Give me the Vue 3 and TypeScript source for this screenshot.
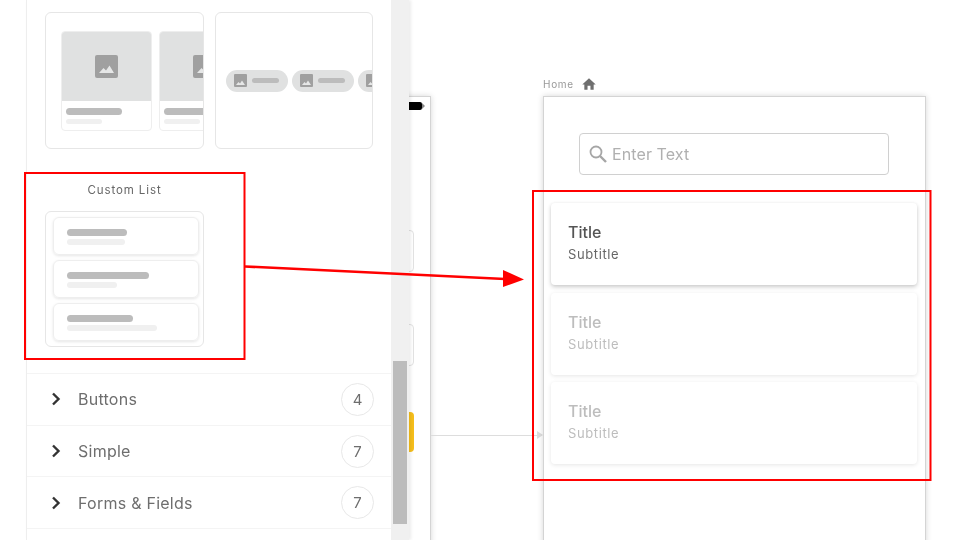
<script setup lang="ts">
interface Section {
  label: string
  count: number
}

const sections: Section[] = [
  { label: 'Buttons', count: 4 },
  { label: 'Simple', count: 7 },
  { label: 'Forms & Fields', count: 7 },
]

// widths of the skeleton bars in the custom list preview
const previewRows = [
  { title: 60, sub: 58 },
  { title: 82, sub: 50 },
  { title: 66, sub: 90 },
]

const listCards = [
  { id: 1, muted: false },
  { id: 2, muted: true },
  { id: 3, muted: true },
]
</script>

<template>
  <div class="stage">
    <aside class="sidebar">
      <div class="panel">
        <div class="thumbs">
          <div class="thumb thumb-cards">
            <div v-for="n in 2" :key="n" class="mini-card">
              <div class="mini-image">
                <svg class="image-icon" viewBox="0 0 23 23">
                  <rect width="23" height="23" rx="2" fill="#a0a0a0" />
                  <path d="M4 18l4.500-5 2.500 2.500 3.500-5L19 18z" fill="#e6e7e7" />
                </svg>
              </div>
              <div class="mini-text">
                <span class="bar bar-dark mini-title"></span>
                <span class="bar bar-light mini-sub"></span>
              </div>
            </div>
          </div>
          <div class="thumb thumb-chips">
            <div v-for="n in 3" :key="n" class="chip">
              <svg class="chip-icon" viewBox="0 0 13 13">
                <rect width="13" height="13" rx="1" fill="#a0a0a0" />
                <path d="M2 11l2.500-3 1.500 1.500 2-3 3 4.500z" fill="#e6e7e7" />
              </svg>
              <span class="bar bar-dark chip-bar"></span>
            </div>
          </div>
        </div>

        <div class="custom-list">
          <div class="custom-label">Custom List</div>
          <div class="thumb preview">
            <div v-for="(row, i) in previewRows" :key="i" class="preview-row">
              <span class="bar bar-dark preview-title" :style="{ width: row.title + 'px' }"></span>
              <span class="bar bar-light preview-sub" :style="{ width: row.sub + 'px' }"></span>
            </div>
          </div>
        </div>

        <ul class="sections">
          <li v-for="s in sections" :key="s.label" class="section">
            <svg class="chevron" viewBox="0 0 10 14">
              <path d="M2 1.500L7.500 7 2 12.500" fill="none" stroke="#333" stroke-width="2.400" />
            </svg>
            <span class="section-label">{{ s.label }}</span>
            <span class="count">{{ s.count }}</span>
          </li>
        </ul>
      </div>
      <div class="scrollbar">
        <div class="scroll-thumb"></div>
      </div>
    </aside>

    <main class="canvas">
      <div class="window window-back">
        <div class="back-pill"></div>
        <div class="back-input first"></div>
        <div class="back-input second"></div>
        <div class="back-button"></div>
      </div>

      <div class="connector"></div>

      <div class="screen">
        <div class="breadcrumb">
          <span>Home</span>
          <svg class="home-icon" viewBox="0 0 24 24">
            <path d="M9.500 22v-7h5v7h5.500v-9h3.500L12 2 .5 13H4v9z" fill="#6f6f6f" />
          </svg>
        </div>
        <div class="window window-front">
          <div class="search">
            <svg class="search-icon" viewBox="0 0 18 18">
              <circle cx="7" cy="7" r="5.500" fill="none" stroke="#a6a6a6" stroke-width="1.800" />
              <path d="M11 11l6 6" stroke="#a6a6a6" stroke-width="2.400" />
            </svg>
            <span class="search-text">Enter Text</span>
          </div>
          <div class="list">
            <div v-for="card in listCards" :key="card.id" class="list-card" :class="{ muted: card.muted }">
              <div class="card-title">Title</div>
              <div class="card-sub">Subtitle</div>
            </div>
          </div>
        </div>
      </div>
    </main>

    <!-- annotation layer, drawn over the whole shot -->
    <svg class="notes" viewBox="0 0 960 540">
      <rect x="25" y="173" width="219.500" height="186" fill="none" stroke="#f00" stroke-width="2" />
      <rect x="533" y="191" width="397.500" height="289" fill="none" stroke="#f00" stroke-width="2" />
      <path d="M245 266.500L505 279" fill="none" stroke="#f00" stroke-width="2.500" />
      <path d="M503 270L524 279.500 503 287z" fill="#f00" />
    </svg>
  </div>
</template>

<style>
html,
body {
  margin: 0;
  background: #fff;
}
</style>

<style scoped>
.stage {
  position: relative;
  display: flex;
  width: 960px;
  height: 540px;
  overflow: hidden;
  background: #fff;
  font-family: "Inter", "Liberation Sans", sans-serif;
  filter: blur(0.45px);
}

/* left panel */
.sidebar {
  position: relative;
  z-index: 2;
  display: flex;
  flex: none;
  width: 383px;
  margin-left: 26px;
  background: #fff;
  border-left: 1px solid #eee;
  box-sizing: border-box;
  box-shadow: 2px 0 3px rgba(0, 0, 0, 0.08);
}

.panel {
  flex: 1;
  min-width: 0;
  padding-top: 12px;
}

.scrollbar {
  flex: none;
  width: 18px;
  padding-top: 361px;
  box-sizing: border-box;
  background: #f0f0f0;
}

.scroll-thumb {
  width: 14px;
  height: 163px;
  margin-left: 2px;
  background: #bcbcbc;
}

.thumbs {
  display: flex;
  gap: 11px;
  padding-left: 18px;
}

.thumb {
  box-sizing: border-box;
  height: 137px;
  overflow: hidden;
  background: #fff;
  border: 1px solid #e6e6e6;
  border-radius: 6px;
}

.thumb-cards {
  display: flex;
  gap: 7px;
  width: 159px;
  padding: 18px 0 0 15px;
}

.mini-card {
  flex: none;
  box-sizing: border-box;
  width: 91px;
  height: 100px;
  overflow: hidden;
  border: 1px solid #eeeeee;
  border-radius: 4px;
}

.mini-image {
  display: flex;
  align-items: center;
  justify-content: center;
  height: 70px;
  margin: -1px -1px 0;
  background: #e0e1e1;
}

.image-icon {
  width: 23px;
  height: 23px;
}

.mini-text {
  display: flex;
  flex-direction: column;
  gap: 4px;
  padding: 7px 4px;
}

.bar {
  display: block;
  border-radius: 4px;
}

.bar-dark {
  background: #bcbcbc;
}

.bar-light {
  background: #f0f0f0;
}

.mini-title {
  width: 56px;
  height: 7px;
}

.mini-sub {
  width: 36px;
  height: 5px;
}

.thumb-chips {
  display: flex;
  align-items: center;
  gap: 4px;
  width: 158px;
  padding-left: 10px;
}

.chip {
  display: flex;
  flex: none;
  align-items: center;
  gap: 5px;
  box-sizing: border-box;
  width: 62px;
  height: 22px;
  padding-left: 8px;
  background: #e0e1e1;
  border-radius: 11px;
}

.chip-icon {
  width: 13px;
  height: 13px;
}

.chip-bar {
  width: 27px;
  height: 5px;
}

.custom-list {
  width: 159px;
  margin: 33px 0 0 18px;
}

.custom-label {
  height: 16px;
  font-size: 11.500px;
  line-height: 16px;
  letter-spacing: 0.9px;
  text-align: center;
  color: #666;
}

.preview {
  display: flex;
  flex-direction: column;
  gap: 5px;
  height: 136px;
  margin-top: 13px;
  padding: 5px 4px 0 7px;
}

.preview-row {
  display: flex;
  flex-direction: column;
  gap: 3px;
  box-sizing: border-box;
  height: 38px;
  padding: 11px 0 0 13px;
  border: 1px solid #eee;
  border-radius: 6px;
  box-shadow: 0 1px 3px rgba(0, 0, 0, 0.1);
}

.preview-title {
  height: 7px;
}

.preview-sub {
  height: 6px;
}

.sections {
  margin: 26px 0 0;
  padding: 0;
  list-style: none;
  border-top: 1px solid #f4f4f4;
}

.section {
  display: flex;
  align-items: center;
  box-sizing: border-box;
  height: 51.700px;
  padding: 0 17px 0 24px;
  border-bottom: 1px solid #f4f4f4;
}

.chevron {
  flex: none;
  width: 10px;
  height: 14px;
}

.section-label {
  flex: 1;
  margin-left: 17px;
  font-size: 16px;
  letter-spacing: 0.25px;
  color: #6e6e6e;
}

.count {
  display: flex;
  align-items: center;
  justify-content: center;
  box-sizing: border-box;
  width: 33px;
  height: 33px;
  font-size: 15px;
  color: #6e6e6e;
  border: 1px solid #e8e8e8;
  border-radius: 50%;
}

/* free canvas with the app screens */
.canvas {
  position: relative;
  flex: 1;
  overflow: hidden;
}

.window {
  background: #fff;
  border: 1px solid #d4d4d4;
  box-shadow: 0 0 6px rgba(0, 0, 0, 0.16);
  box-sizing: border-box;
}

.window-back {
  position: absolute;
  top: 96px;
  left: -60px;
  display: flex;
  flex-direction: column;
  align-items: flex-end;
  width: 82px;
  height: 460px;
}

.back-pill {
  position: relative;
  width: 60px;
  height: 8px;
  margin: 5px 8px 0 0;
  background: #000;
  border-radius: 2px;
}

.back-pill::after {
  content: "";
  position: absolute;
  top: 1px;
  right: -3px;
  border-top: 3px solid transparent;
  border-bottom: 3px solid transparent;
  border-left: 3px solid #888;
}

.back-input {
  box-sizing: border-box;
  width: 60px;
  height: 42px;
  margin-right: 16px;
  border: 1px solid #e2e2e2;
  border-radius: 4px;
}

.back-input.first {
  margin-top: 120px;
}

.back-input.second {
  margin-top: 52px;
}

.back-button {
  width: 60px;
  height: 40px;
  margin: 46px 16px 0 0;
  background: #f6bf1c;
  border-radius: 4px;
}

.connector {
  position: absolute;
  top: 435px;
  left: 22px;
  width: 106px;
  height: 1px;
  background: #ddd;
}

.connector::after {
  content: "";
  position: absolute;
  top: -4px;
  right: -6px;
  border-top: 4.500px solid transparent;
  border-bottom: 4.500px solid transparent;
  border-left: 6px solid #ddd;
}

.screen {
  position: absolute;
  top: 76px;
  left: 134px;
  width: 383px;
}

.breadcrumb {
  display: flex;
  align-items: center;
  gap: 8px;
  height: 15px;
  font-size: 10px;
  letter-spacing: 0.7px;
  color: #999;
}

.home-icon {
  width: 14px;
  height: 14px;
}

.window-front {
  display: flex;
  flex-direction: column;
  height: 470px;
  margin-top: 5px;
  padding: 36px 8px 0 7px;
}

.search {
  display: flex;
  align-items: center;
  align-self: center;
  gap: 5px;
  box-sizing: border-box;
  width: 310px;
  height: 42px;
  padding-left: 9px;
  border: 1px solid #d0d0d0;
  border-radius: 4px;
}

.search-icon {
  width: 18px;
  height: 18px;
}

.search-text {
  font-size: 16px;
  letter-spacing: 0.1px;
  color: #b0b0b0;
}

.list {
  display: flex;
  flex-direction: column;
  gap: 7.500px;
  margin-top: 28px;
}

.list-card {
  box-sizing: border-box;
  height: 82px;
  padding: 19px 17px 0;
  background: #fff;
  border-radius: 4px;
  box-shadow: 0 2px 4px rgba(0, 0, 0, 0.2), 0 0 3px rgba(0, 0, 0, 0.04);
}

.list-card.muted {
  box-shadow: 0 1px 4px rgba(0, 0, 0, 0.1);
}

.card-title {
  font-size: 16px;
  font-weight: 500;
  line-height: 20px;
  color: #555;
}

.card-sub {
  margin-top: 3px;
  font-size: 13px;
  line-height: 18px;
  letter-spacing: 0.6px;
  color: #666;
}

.muted .card-title,
.muted .card-sub {
  color: #bdbdbd;
}

.notes {
  position: absolute;
  inset: 0;
  z-index: 3;
  width: 960px;
  height: 540px;
  pointer-events: none;
}
</style>
